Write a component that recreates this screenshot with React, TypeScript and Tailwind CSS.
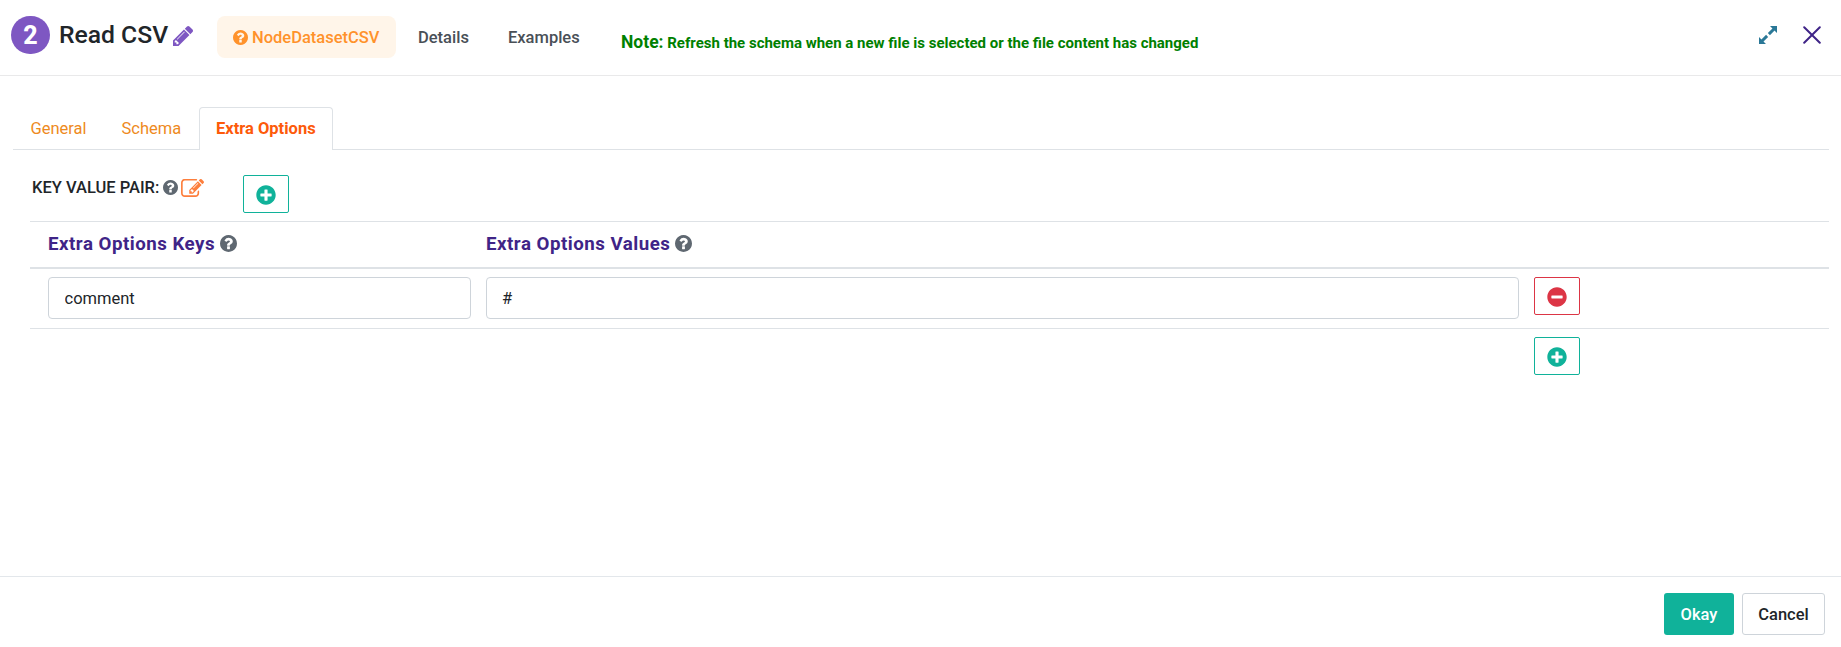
import React from "react";
import { FaPlusCircle, FaMinusCircle } from "react-icons/fa";

function HelpIcon({ size, className = "" }: { size: number; className?: string }) {
  return (
    <svg width={size} height={size} viewBox="128 128 1536 1536" fill="currentColor" className={`shrink-0 ${className}`}>
      <path d="M1024 1376v-192q0-14-9-23t-23-9h-192q-14 0-23 9t-9 23v192q0 14 9 23t23 9h192q14 0 23-9t9-23zm256-672q0-88-55.5-163t-138.5-116-170-41q-243 0-371 213-15 24 8 42l132 100q7 6 19 6 16 0 25-12 53-68 86-92 34-24 86-24 48 0 85.5 26t37.500 59q0 38-20 61t-68 45q-63 28-115.500 86.500t-52.500 125.500v36q0 14 9 23t23 9h192q14 0 23-9t9-23q0-19 21.500-49.500t54.500-49.500q32-18 49-28.500t46-35 44.500-48 28-60.500 12.500-81zm384 192q0 209-103 385.500t-279.500 279.500-385.500 103-385.500-103-279.500-279.500-103-385.500 103-385.500 279.500-279.500 385.500-103 385.500 103 279.500 279.500 103 385.500z" />
    </svg>
  );
}

function PencilIcon({ className = "" }: { className?: string }) {
  return (
    <svg width="20" height="20" viewBox="128 149 1515 1515" fill="currentColor" className={`shrink-0 ${className}`}>
      <path d="M491 1536l91-91-235-235-91 91v107h128v128h107zm523-928q0-22-22-22-10 0-17 7l-542 542q-7 7-7 17 0 22 22 22 10 0 17-7l542-542q7-7 7-17zm-54-192l416 416-832 832h-416v-416zm683 96q0 53-37 90l-166 166-416-416 166-165q36-38 90-38 53 0 91 38l235 234q37 39 37 91z" />
    </svg>
  );
}

function EditIcon({ className = "" }: { className?: string }) {
  return (
    <svg width="23" height="18" viewBox="0 136 1784 1400" fill="currentColor" className={`shrink-0 ${className}`}>
      <path d="M888 1184l116-116-152-152-116 116v56h96v96h56zm440-720q-16-16-33 1l-350 350q-17 17-1 33t33-1l350-350q17-17 1-33zm80 594v190q0 119-84.5 203.5t-203.5 84.5h-832q-119 0-203.5-84.5t-84.5-203.5v-832q0-119 84.5-203.5t203.5-84.5h832q63 0 117 25 15 7 18 23 3 17-9 29l-49 49q-14 14-32 8-23-6-45-6h-832q-66 0-113 47t-47 113v832q0 66 47 113t113 47h832q66 0 113-47t47-113v-126q0-13 9-22l64-64q15-15 35-7t20 29zm-96-738l288 288-672 672h-288v-288zm444 132l-92 92-288-288 92-92q28-28 68-28t68 28l152 152q28 28 28 68t-28 68z" />
    </svg>
  );
}

function ExpandIcon() {
  return (
    <svg width="18" height="18" viewBox="0 0 18 18" fill="#2a7897" stroke="#2a7897">
      <path d="M11 0H18V7ZM0 11V18H7Z" stroke="none" />
      <path d="M15.500 2.500L9.900 8.100M8.100 9.900L2.500 15.500" strokeWidth="2.900" fill="none" />
    </svg>
  );
}

function CloseIcon() {
  return (
    <svg width="18" height="18" viewBox="0 0 18 18" fill="none" stroke="#3f2487" strokeWidth="2" strokeLinecap="round">
      <path d="M1.200 1.200L16.800 16.800M16.800 1.200L1.200 16.800" />
    </svg>
  );
}

function IconButton({ tone }: { tone: "add" | "remove" }) {
  return tone === "add" ? (
    <button className="flex h-[38px] w-[46px] items-center justify-center rounded-[2px] border border-[#10b29a] pt-px text-[#10b29a]">
      <FaPlusCircle size={20} />
    </button>
  ) : (
    <button className="flex h-[38px] w-[46px] items-center justify-center rounded-[2px] border border-[#dc3545] pt-px text-[#dc3545]">
      <FaMinusCircle size={20} />
    </button>
  );
}

export default function App() {
  return (
    <div className="flex h-[647px] w-full flex-col bg-white font-['Roboto',sans-serif] text-[16.5px] text-[#212529]">
      <header className="flex h-[76px] shrink-0 items-start border-b border-[#e9e9ea] pl-[11px]">
        <div className="mt-4 flex h-[38px] w-[39px] items-center justify-center rounded-full bg-[#7e57c2] pt-px text-[25px] font-extrabold text-white">
          2
        </div>
        <h1 className="mt-[17px] ml-[9px] w-[110px] text-[24.7px] leading-9 font-medium whitespace-nowrap">Read CSV</h1>
        <PencilIcon className="mt-[26px] ml-1 text-[#7e57c2]" />
        <nav className="mt-4 ml-6 flex h-[42px] items-center font-medium text-[#495057]">
          <a className="flex h-[42px] w-[179px] items-center gap-1 rounded-lg bg-[#fff5e9] pl-4 text-[#ff922b]">
            <HelpIcon size={15} />
            <span className="pt-0.5">NodeDatasetCSV</span>
          </a>
          <a className="ml-[22px] w-[90px] pt-0.5">Details</a>
          <a className="w-[113px] pt-0.5">Examples</a>
        </nav>
        <p className="mt-[30px] text-[15px] leading-6 font-bold whitespace-nowrap text-[#008000]">
          <span className="text-[17.5px]">Note:</span> Refresh the schema when a new file is selected or the file content has changed
        </p>
        <div className="mt-[26px] mr-[20px] ml-auto flex items-center gap-[26px]">
          <ExpandIcon />
          <CloseIcon />
        </div>
      </header>

      <main className="flex-1 pt-[31px] pr-3 pl-[13px]">
        <div className="flex h-[43px] border-b border-[#dee2e6] text-[#ee8a1d]">
          <a className="flex h-[43px] w-[91px] items-center pt-px pl-[17.5px]">General</a>
          <a className="flex h-[43px] w-[95px] items-center pt-px pl-[17.5px]">Schema</a>
          <a className="flex h-[43px] w-[134px] items-center rounded-t border border-b-0 border-[#dee2e6] bg-white pl-4 font-bold text-[#fd5a0a]">
            Extra Options
          </a>
        </div>

        <section className="pl-[17px]">
          <div className="flex h-[71px] items-start">
            <div className="mt-[25px] ml-[2px] flex w-[211px] items-center font-medium whitespace-nowrap">
              <span className="w-[131px] pt-px">KEY VALUE PAIR:</span>
              <HelpIcon size={15} className="text-[#5f6871]" />
              <EditIcon className="ml-[3px] text-[#fd7e3c]" />
            </div>
            <div className="mt-[25px]">
              <IconButton tone="add" />
            </div>
          </div>
          <div className="grid h-[48px] grid-cols-[438px_1fr] border-t border-b-2 border-t-[#dee2e6] border-b-[#dee2e6] pl-[18px] text-[18.700px] font-bold tracking-[0.5px] text-[#3f2487]">
            <div className="flex h-[43px] items-center gap-1.5">
              <span className="pt-0.5">Extra Options Keys</span>
              <HelpIcon size={17} className="-ml-px text-[#5f6871]" />
            </div>
            <div className="flex h-[43px] items-center gap-1.5">
              <span className="pt-0.5">Extra Options Values</span>
              <HelpIcon size={17} className="-ml-px text-[#5f6871]" />
            </div>
          </div>
          <div className="flex h-[60px] border-b border-[#dee2e6] pt-2 pl-[18px]">
            <input defaultValue="comment" className="h-[42px] w-[423px] rounded border border-[#ced4da] px-[15.5px]" />
            <input defaultValue="#" className="mr-[15px] ml-[15px] h-[42px] w-[1033px] rounded border border-[#ced4da] px-[15px]" />
            <IconButton tone="remove" />
          </div>
          <div className="flex pt-2 pl-[1504px]">
            <IconButton tone="add" />
          </div>
        </section>
      </main>

      <footer className="flex h-[71px] shrink-0 justify-end gap-2 border-t border-[#e3e7eb] pt-4 pr-4 font-medium">
        <button className="h-[42px] w-[70px] rounded-[3px] bg-[#10b29a] pt-0.5 text-white">Okay</button>
        <button className="h-[42px] w-[83px] rounded-[3px] border border-[#ced4da] pt-0.5">Cancel</button>
      </footer>
    </div>
  );
}
